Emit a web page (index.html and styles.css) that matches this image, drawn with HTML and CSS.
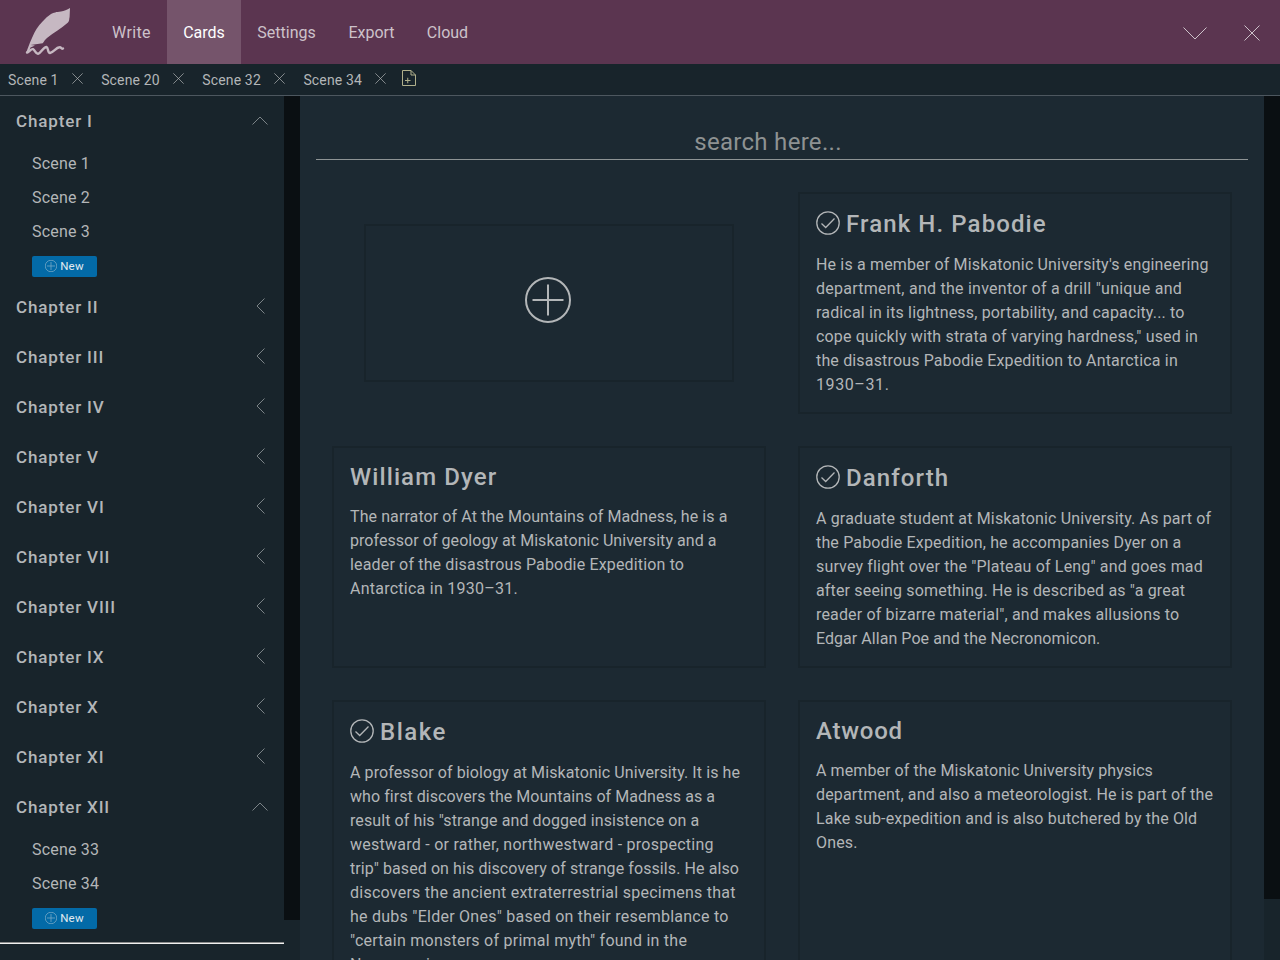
FILE: index.html
```
<!DOCTYPE html>
<html lang="en">
<head>
<meta charset="utf-8">
<title>Cards</title>
<link rel="stylesheet" href="styles.css">
</head>
<body>
<svg class="defs" width="0" height="0">
  <symbol id="close" viewBox="0 0 16 16"><path d="M.5.5l15 15M15.5.5l-15 15"/></symbol>
  <symbol id="up" viewBox="0 0 16 9"><path d="M.5 8.500L8 1l7.500 7.500"/></symbol>
  <symbol id="left" viewBox="0 0 9 16"><path d="M8.500.5L1 8l7.500 7.500"/></symbol>
  <symbol id="down" viewBox="0 0 24 13"><path d="M.5.5L12 12 23.500.5"/></symbol>
  <symbol id="plus" viewBox="0 0 46 46"><circle cx="23" cy="23" r="22"/><path d="M23 7.500v31M7.500 23h31"/></symbol>
  <symbol id="check" viewBox="0 0 24 24"><circle cx="12" cy="12" r="11.200"/><path d="M5.500 12.500l4.200 4 8.800-9"/></symbol>
</svg>
<header class="header">
  <svg class="logo" viewBox="0 0 50 50">
    <path class="feather" d="M45 1C42 3 39 4 36 4.500C31 5 29 5.500 26 7C20 11 15 17 11.500 22C8.500 27 7 31 5 35.500L1 46L3.300 46.300L5.500 40.500L10 38.500L5.500 38L17.700 36.300C19.500 34 20 32.500 22 31C29 25 36 22 43 15.500C44.500 14 44 12 44.600 10Z"/>
    <path class="scribble" d="M2 45.500C4.500 45 6 41.500 8 42.200C10 43 10.500 47 13 46.800C16.500 46 18 40 21.500 40C23.500 40.500 22.500 46 25 46C28.500 45.500 31 40.500 34.500 40.300C36.500 40 36 42.500 38 41.500"/>
  </svg>
  <nav class="menu">
    <a class="menu-item write">Write</a>
    <a class="menu-item cards-link active">Cards</a>
    <a class="menu-item settings">Settings</a>
    <a class="menu-item export">Export</a>
    <a class="menu-item cloud">Cloud</a>
  </nav>
  <div class="window-actions">
    <svg class="icon down"><use href="#down"/></svg>
    <svg class="icon close-window"><use href="#close"/></svg>
  </div>
</header>
<div class="tabs">
  <div class="tab"><span>Scene 1</span><svg class="icon close"><use href="#close"/></svg></div>
  <div class="tab"><span>Scene 20</span><svg class="icon close"><use href="#close"/></svg></div>
  <div class="tab"><span>Scene 32</span><svg class="icon close"><use href="#close"/></svg></div>
  <div class="tab"><span>Scene 34</span><svg class="icon close"><use href="#close"/></svg></div>
  <svg class="icon new-tab" viewBox="0 0 14 16"><path d="M.5.5h8.500l4.500 4.500v10.500H.5zM9 .5V5h4.500M3 10.500h5.500M5.750 7.750v5.500"/></svg>
</div>
<div class="layout">
  <aside class="sidebar">
    <div class="chapter"><b>Chapter I</b><svg class="icon up"><use href="#up"/></svg></div>
    <div class="scene">Scene 1</div>
    <div class="scene">Scene 2</div>
    <div class="scene">Scene 3</div>
    <button class="new"><svg class="icon"><use href="#plus"/></svg>New</button>
    <div class="chapter"><b>Chapter II</b><svg class="icon left"><use href="#left"/></svg></div>
    <div class="chapter"><b>Chapter III</b><svg class="icon left"><use href="#left"/></svg></div>
    <div class="chapter"><b>Chapter IV</b><svg class="icon left"><use href="#left"/></svg></div>
    <div class="chapter"><b>Chapter V</b><svg class="icon left"><use href="#left"/></svg></div>
    <div class="chapter"><b>Chapter VI</b><svg class="icon left"><use href="#left"/></svg></div>
    <div class="chapter"><b>Chapter VII</b><svg class="icon left"><use href="#left"/></svg></div>
    <div class="chapter"><b>Chapter VIII</b><svg class="icon left"><use href="#left"/></svg></div>
    <div class="chapter"><b>Chapter IX</b><svg class="icon left"><use href="#left"/></svg></div>
    <div class="chapter"><b>Chapter X</b><svg class="icon left"><use href="#left"/></svg></div>
    <div class="chapter"><b>Chapter XI</b><svg class="icon left"><use href="#left"/></svg></div>
    <div class="chapter"><b>Chapter XII</b><svg class="icon up"><use href="#up"/></svg></div>
    <div class="scene">Scene 33</div>
    <div class="scene">Scene 34</div>
    <button class="new"><svg class="icon"><use href="#plus"/></svg>New</button>
    <div class="rule"></div>
  </aside>
  <div class="scrollbar"><div class="thumb side-thumb"></div></div>
  <main class="content">
    <div class="search">search here...</div>
    <div class="grid">
      <div class="card add"><svg class="icon"><use href="#plus"/></svg></div>
      <article class="card">
        <h2 class="checked"><svg class="icon"><use href="#check"/></svg>Frank H. Pabodie</h2>
        <p>He is a member of Miskatonic University's engineering<br><span class="wide">department, and the inventor of a drill "unique and</span><br>radical in its lightness, portability, and capacity... to<br>cope quickly with strata of varying hardness," used in<br>the disastrous Pabodie Expedition to Antarctica in<br><span class="wider">1930–31.</span></p>
      </article>
      <article class="card">
        <h2>William Dyer</h2>
        <p><span class="snug">The narrator of At the Mountains of Madness, he is a</span><br><span class="tight">professor of geology at Miskatonic University and a</span><br>leader of the disastrous Pabodie Expedition to<br><span class="wide">Antarctica in 1930–31.</span></p>
      </article>
      <article class="card">
        <h2 class="checked"><svg class="icon"><use href="#check"/></svg>Danforth</h2>
        <p>A graduate student at Miskatonic University. As part of<br>the Pabodie Expedition, he accompanies Dyer on a<br>survey flight over the "Plateau of Leng" and goes mad<br>after seeing something. He is described as "a great<br>reader of bizarre material", and makes allusions to<br><span class="tight">Edgar Allan Poe and the Necronomicon.</span></p>
      </article>
      <article class="card">
        <h2 class="checked spaced"><svg class="icon"><use href="#check"/></svg>Blake</h2>
        <p><span class="snug">A professor of biology at Miskatonic University. It is he</span><br><span class="tight">who first discovers the Mountains of Madness as a</span><br><span class="snug">result of his "strange and dogged insistence on a</span><br><span class="wide">westward - or rather, northwestward - prospecting</span><br><span class="snug">trip" based on his discovery of strange fossils. He also</span><br><span class="wide">discovers the ancient extraterrestrial specimens that</span><br><span class="wide">he dubs "Elder Ones" based on their resemblance to</span><br><span class="wide">"certain monsters of primal myth" found in the</span><br>Necronomicon.</p>
      </article>
      <article class="card">
        <h2 class="narrow">Atwood</h2>
        <p><span class="snug">A member of the Miskatonic University physics</span><br>department, and also a meteorologist. He is part of the<br>Lake sub-expedition and is also butchered by the Old<br>Ones.</p>
      </article>
    </div>
  </main>
  <div class="scrollbar"><div class="thumb main-thumb"></div></div>
</div>
</body>
</html>
```
FILE: styles.css
```
* { box-sizing: border-box; }
body {
  margin: 0;
  height: 960px;
  overflow: hidden;
  display: flex;
  flex-direction: column;
  background: #18242b;
  color: #b3b6b8;
  font: 16px/24px Roboto, "Noto Sans", sans-serif;
}
.defs { position: absolute; }
.icon { fill: none; stroke: currentColor; stroke-width: 1; flex: none; }

.header { height: 64px; flex: none; display: flex; align-items: center; background: #5b3550; color: #cdc2ca; }
.logo { width: 50px; height: 50px; margin: 0 21px 0 25px; }
.feather { fill: #c6b8c2; }
.scribble { fill: none; stroke: #c6b8c2; stroke-width: 2.4; stroke-linecap: round; stroke-linejoin: round; }
.menu { display: flex; height: 64px; }
.menu-item { display: flex; align-items: center; justify-content: center; padding-top: 2px; }
.menu-item.active { background: #75546b; color: #fff; }
.write { width: 71px; letter-spacing: .35px; }
.cards-link { width: 74px; }
.settings { width: 91px; }
.export { width: 79px; }
.cloud { width: 73px; }
.window-actions { display: flex; align-items: center; gap: 37px; margin-left: auto; padding: 2px 20px 0 0; }
.down { width: 24px; height: 13px; }
.close-window { width: 16px; height: 16px; }

.tabs { height: 32px; flex: none; display: flex; align-items: center; padding-left: 8px; border-bottom: 1px solid #4d575f; font-size: 14px; letter-spacing: .15px; }
.tab { display: flex; align-items: center; gap: 13px; margin-right: 18.5px; }
.close { width: 11px; height: 11px; margin-top: -3px; }
.new-tab { width: 14px; height: 16px; margin: -3px 0 0 -3px; color: #b0b08c; }

.layout { flex: 1; min-height: 0; display: flex; }
.sidebar { width: 284px; overflow: hidden; }
.chapter { height: 50px; display: flex; align-items: center; justify-content: space-between; padding: 0 16px; font-size: 17px; letter-spacing: .85px; }
.chapter b { font-weight: 500; }
.chapter .icon { margin-top: -2px; }
.up { width: 16px; height: 9px; color: #7b8387; }
.left { width: 9px; height: 16px; margin-right: 3px; color: #7b8387; }
.scene { height: 34px; line-height: 36px; padding-left: 32px; letter-spacing: .2px; }
.new { display: flex; align-items: center; justify-content: center; gap: 3px; width: 65px; height: 21px; margin: 8px 0 5px 32px; padding: 0; border: 0; border-radius: 2px; background: #036aa7; color: #e2ebf0; font: 11.5px/21px Roboto, sans-serif; letter-spacing: .2px; }
.new .icon { width: 12px; height: 12px; stroke-width: 3; color: #79a9c6; margin-top: -2px; }
.rule { margin-top: 13px; height: 2px; background: #f0f0f0; border-top: 1px solid #8b8c8c; }

.scrollbar { width: 16px; flex: none; background: #18242b; }
.thumb { background: #0a0f12; }
.side-thumb { height: 824px; }
.main-thumb { height: 803px; }

.content { flex: 1; padding: 28px 16px 0; background: #1c2932; overflow: hidden; }
.search { height: 36px; line-height: 36px; padding-right: 28px; border-bottom: 1px solid #8e9495; color: #8e9292; font-size: 24px; letter-spacing: .3px; text-align: center; }
.grid { display: grid; grid-template-columns: 434px 434px; grid-template-rows: 222px 222px auto; gap: 32px; padding: 32px 16px; }
.card { border: 2px solid #18242b; padding: 16px; white-space: nowrap; }
.add { margin: 32px; padding: 0; display: flex; align-items: center; justify-content: center; }
.add .icon { width: 46px; height: 46px; stroke-width: 2; margin: -7px 2px 0 0; }
h2 { margin: 0 0 9px; height: 32px; line-height: 26px; font-size: 24px; font-weight: 500; letter-spacing: 1.1px; display: flex; }
h2.checked { height: 34px; line-height: 29px; }
h2.spaced { letter-spacing: 1.500px; }
h2.narrow { letter-spacing: .75px; }
h2 .icon { width: 24px; height: 24px; margin: 1px 6px 0 0; stroke-width: 1.3; }
p { margin: 0; letter-spacing: .16px; }
.tight { letter-spacing: .05px; }
.snug { letter-spacing: .09px; }
.wide { letter-spacing: .25px; }
.wider { letter-spacing: .6px; }
```
